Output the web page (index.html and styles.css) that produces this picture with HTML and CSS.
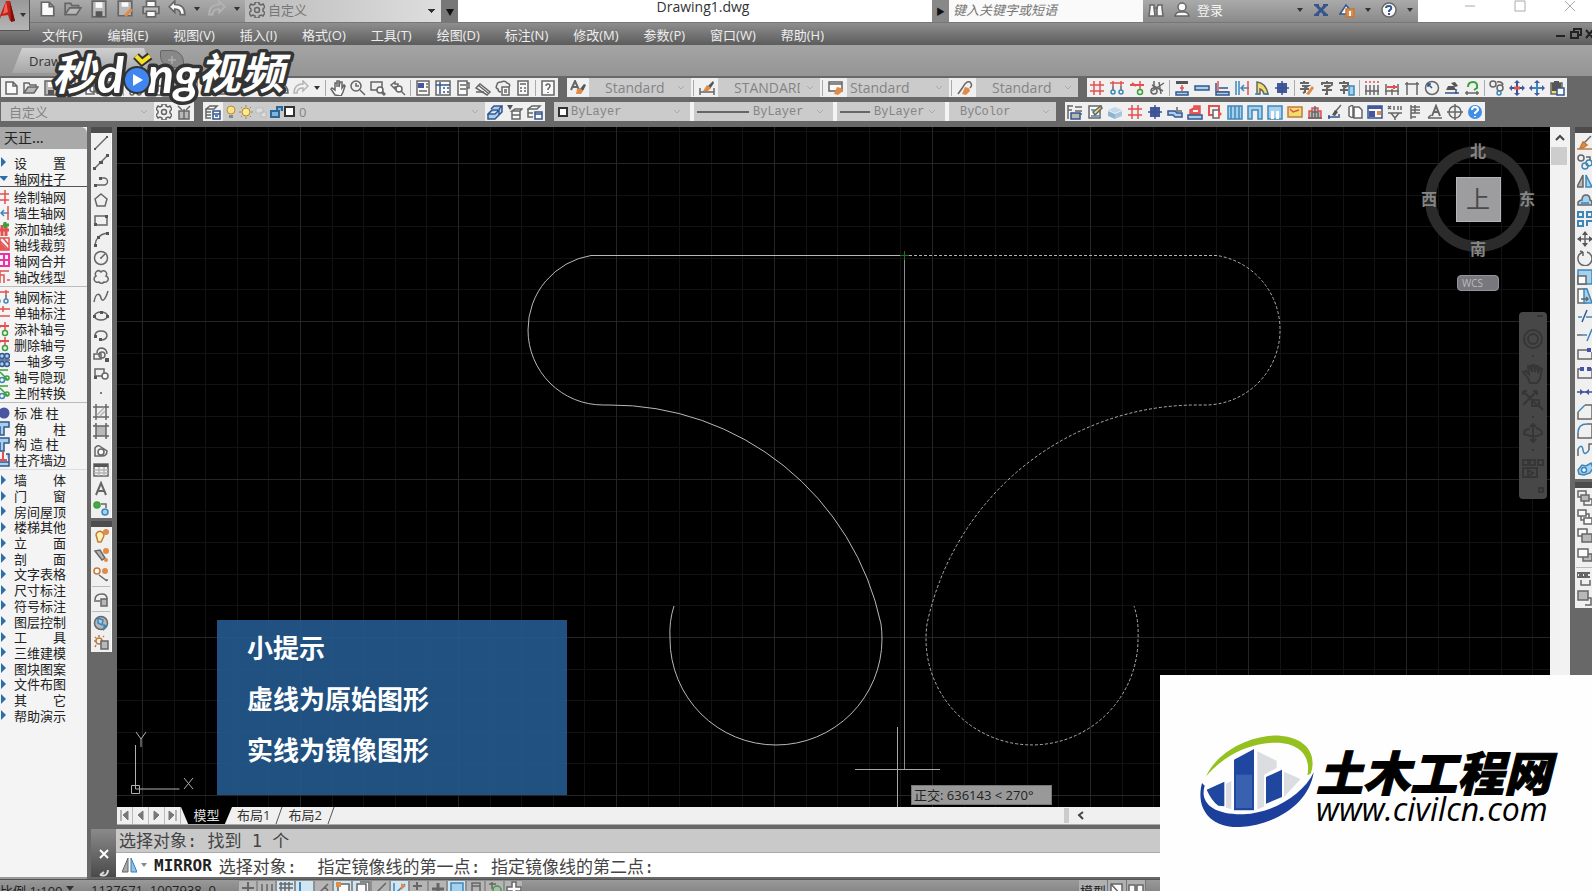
FILE: index.html
```html
<!DOCTYPE html>
<html lang="zh-CN">
<head>
    <meta charset="UTF-8">
    <meta name="viewport" content="width=device-width, initial-scale=1.0">
    <title>Drawing1.dwg</title>
    <link rel="stylesheet" href="styles.css">
</head>
<body>
<div class="app">

    <header class="titlebar">
        <button class="app-button" aria-label="应用程序菜单">
            <svg width="22" height="26" viewBox="0 0 22 26"><path d="M0 24L9 2h4l5 20h-5l-2-6-7 1-2 6z" fill="#c3201a"/><path d="M9 2l-3 13 5-2z" fill="#f0675a"/><path d="M13 2l5 20-4 1z" fill="#7c0f0c"/></svg>
            <span class="caret"></span>
        </button>
        <div class="quick" data-icons="new open save saveas print undo v redo v"></div>
        <label class="workspace">
            <svg class="ic"><use href="#i-gear"/></svg>
            <select aria-label="工作空间"><option>自定义</option></select>
        </label>
        <button class="quick-more" aria-label="更多"><span class="caret"></span></button>
        <h1>Drawing1.dwg</h1>
        <button class="search-toggle" aria-label="展开">▶</button>
        <input class="search" type="text" placeholder="键入关键字或短语" aria-label="搜索">
        <div class="info">
            <div data-icons="binoc user"></div>
            <a class="login" href="#">登录</a>
            <div data-icons="v exch cloud v qhelp v"></div>
        </div>
        <div class="window-controls">
            <button aria-label="最小化"><svg width="12" height="12"><path d="M1 6h10"/></svg></button>
            <button aria-label="最大化"><svg width="12" height="12"><path d="M1 1h10v10H1z"/></svg></button>
            <button aria-label="关闭"><svg width="12" height="12"><path d="M1 1l10 10M11 1L1 11"/></svg></button>
        </div>
    </header>

    <nav class="menubar">
        <a href="#">文件(F)</a>
        <a href="#">编辑(E)</a>
        <a href="#">视图(V)</a>
        <a href="#">插入(I)</a>
        <a href="#">格式(O)</a>
        <a href="#">工具(T)</a>
        <a href="#">绘图(D)</a>
        <a href="#">标注(N)</a>
        <a href="#">修改(M)</a>
        <a href="#">参数(P)</a>
        <a href="#">窗口(W)</a>
        <a href="#">帮助(H)</a>
        <svg class="mdi" width="36" height="14" viewBox="0 0 36 14"><path d="M0 9h9M15 5h7v6h-7zM18 5V2h7v6h-3M30 3l7 8M37 3l-7 8"/></svg>
    </nav>

    <div class="filetabs">
        <button class="filetab">Drawing1</button>
        <button class="newtab" aria-label="新建"><svg width="8" height="8"><path d="M4 0v8M0 4h8" stroke="#bbb"/></svg></button>
        <svg class="watermark" width="260" height="68" viewBox="0 0 260 68">
            <g class="wm-text">
                <text x="4" y="41" class="wm-cjk">秒</text>
                <text x="49" y="44" class="wm-latin">d</text>
                <text x="99" y="44" class="wm-latin">ng</text>
                <text x="150" y="40" class="wm-cjk">视频</text>
            </g>
            <circle cx="89" cy="31" r="14" fill="#333"/>
            <circle cx="89" cy="31" r="12" fill="#3f86f0"/>
            <path d="M85 25l10 6-10 6z" fill="#fff"/>
            <path d="M88 7l6 6 8-6" stroke="#333" stroke-width="8" fill="none"/>
            <path d="M88 7l6 6 8-6" stroke="#f7e020" stroke-width="4" fill="none"/>
        </svg>
    </div>

    <div class="toolrow">
        <div class="bar" data-icons="new open save print preview publish | cut copy paste match | block brush undo undo redo v | hand zoom zoomwin zoomprev | props dcenter palette sheet markup calc | help"></div>
        <div class="bar styles-bar">
            <svg class="ic"><use href="#i-textstyle"/></svg>
            <select class="wide" aria-label="文字样式"><option>Standard</option></select>
            <i class="sep"></i>
            <svg class="ic"><use href="#i-dimstyle"/></svg>
            <select class="wide" aria-label="标注样式"><option>STANDARD</option></select>
            <i class="sep"></i>
            <svg class="ic"><use href="#i-tablestyle"/></svg>
            <select class="tight" aria-label="表格样式"><option>Standard</option></select>
            <i class="sep"></i>
            <svg class="ic"><use href="#i-leaderstyle"/></svg>
            <select class="wide" aria-label="引线样式"><option>Standard</option></select>
        </div>
        <div class="bar" data-icons="axis axismark axisdel axiscut | wallsec wall wallcorner wallgap doorarc column | zi1 zi2 zi3 | dim1 dim2 dim3 circdim leveldim turndim | copyrot movered moveblue clip"></div>
    </div>

    <div class="toolrow">
        <div class="bar">
            <select class="custom-space" aria-label="工作空间"><option>自定义</option></select>
            <div data-icons="gear wsset"></div>
        </div>
        <div class="bar">
            <div data-icons="layers"></div>
            <label class="layer">
                <svg width="72" height="18" viewBox="0 0 72 18">
                    <circle cx="8" cy="7" r="4" fill="#fbe08a" stroke="#b5902c"/><path d="M6 12h4v3H6z" fill="#888"/>
                    <circle cx="23" cy="9" r="4" fill="#ffe98c" stroke="#a98a2e"/><path d="M23 2v2M23 14v2M16 9h2M28 9h2M18 4l1 1M28 4l-1 1M18 14l1-1M28 14l-1-1" stroke="#a98a2e"/>
                    <path d="M33 5h7v5h-7zM38 9h5v5h-5z" fill="#ddd" stroke="#bbb"/>
                    <path d="M48 8h8v6h-8zM54 8V4h5v4" fill="#7fb4dc" stroke="#2d6798" stroke-width="2"/>
                    <path d="M62 4h9v9h-9z" fill="#fff" stroke="#333" stroke-width="2"/>
                </svg>
                <select aria-label="图层"><option>0</option></select>
            </label>
            <div data-icons="layerblue layerprev layerstate"></div>
        </div>
        <div class="bar props-bar">
            <label><i class="swatch"></i><select aria-label="颜色"><option>ByLayer</option></select></label>
            <i class="sep light"></i>
            <label><i class="line"></i><select aria-label="线型"><option>ByLayer</option></select></label>
            <i class="sep light"></i>
            <label class="weight"><i class="line short"></i><select aria-label="线宽"><option>ByLayer</option></select></label>
            <i class="sep light"></i>
            <label class="plot"><select aria-label="打印样式"><option>ByColor</option></select></label>
        </div>
        <div class="bar" data-icons="settings check iso axis column wallj roof redcopy stripe arch archw yellow stairs brush2 pages window symbol ladder lettera north info"></div>
    </div>

    <div class="work">
        <aside class="palette">
            <h2>天正...</h2>
            <ul class="g2">
                <li><button data-icon="more">设　　置</button></li>
                <li><button data-icon="down">轴网柱子</button></li>
            </ul>
            <ul class="g6 dark">
                <li><button data-icon="axis">绘制轴网</button></li>
                <li><button data-icon="wallgap">墙生轴网</button></li>
                <li><button data-icon="addaxis">添加轴线</button></li>
                <li><button data-icon="trimaxis">轴线裁剪</button></li>
                <li><button data-icon="mergeaxis">轴网合并</button></li>
                <li><button data-icon="linetype">轴改线型</button></li>
            </ul>
            <ul class="g7">
                <li><button data-icon="axismark">轴网标注</button></li>
                <li><button data-icon="single">单轴标注</button></li>
                <li><button data-icon="axisdel">添补轴号</button></li>
                <li><button data-icon="axisdel">删除轴号</button></li>
                <li><button data-icon="multi">一轴多号</button></li>
                <li><button data-icon="hidenum">轴号隐现</button></li>
                <li><button data-icon="hidenum">主附转换</button></li>
            </ul>
            <ul class="g4">
                <li><button data-icon="stdcol">标 准 柱</button></li>
                <li><button data-icon="corner">角　　柱</button></li>
                <li><button data-icon="corner">构 造 柱</button></li>
                <li><button data-icon="align">柱齐墙边</button></li>
            </ul>
            <ul class="g16">
                <li><button data-icon="more">墙　　体</button></li>
                <li><button data-icon="more">门　　窗</button></li>
                <li><button data-icon="more">房间屋顶</button></li>
                <li><button data-icon="more">楼梯其他</button></li>
                <li><button data-icon="more">立　　面</button></li>
                <li><button data-icon="more">剖　　面</button></li>
                <li><button data-icon="more">文字表格</button></li>
                <li><button data-icon="more">尺寸标注</button></li>
                <li><button data-icon="more">符号标注</button></li>
                <li><button data-icon="more">图层控制</button></li>
                <li><button data-icon="more">工　　具</button></li>
                <li><button data-icon="more">三维建模</button></li>
                <li><button data-icon="more">图块图案</button></li>
                <li><button data-icon="more">文件布图</button></li>
                <li><button data-icon="more">其　　它</button></li>
                <li><button data-icon="more">帮助演示</button></li>
            </ul>
        </aside>

        <div class="desk">
            <div class="upper">
                <div class="side">
                    <div class="grip"></div>
                    <div class="vbar draw" data-icons="line xline pline polygon rect arc circle revcloud spline ellipse earc insert mkblock point hatch gradient region table mtext addsel"></div>
                    <div class="grip"></div>
                    <div class="vbar isolate" data-icons="bulb1 bulb2 bulb3 | cloudset | globe sunset"></div>
                </div>

                <div class="frame">
                    <div class="canvas-row">
                        <main class="canvas">
                            <svg class="drawing" width="100%" height="100%">
                                <defs>
                                    <pattern id="canvas-grid" x="25" y="36" width="158" height="158" patternUnits="userSpaceOnUse">
                                        <path class="minor" d="M32.5 0v158M63.5 0v158M95.5 0v158M126.5 0v158M0 32.5h158M0 63.5h158M0 95.5h158M0 126.5h158"/>
                                        <path class="major" d="M.5 0v158M0 .5h158"/>
                                    </pattern>
                                </defs>
                                <rect width="100%" height="100%" fill="url(#canvas-grid)"/>
                                <!-- mirrored result -->
                                <path class="solid" d="M787 128.500H474A75 75 0 0 0 411 203A75 75 0 0 0 486 278H492A276 276 0 0 1 764 497Q765 505 765 512A106 106 0 0 1 553 512Q552 494 557 479"/>
                                <!-- original object -->
                                <path class="dashed" d="M787 128.500H1100A75 75 0 0 1 1163 203A75 75 0 0 1 1088 278H1082A276 276 0 0 0 810 497Q809 505 809 512A106 106 0 0 0 1021 512Q1022 494 1017 479"/>
                                <path class="axis-line" d="M787.500 128V643"/>
                                <path class="snap" d="M783 128.500h9M787.500 124v9"/>
                                <path class="cross" d="M780.500 600v90M738 642.500h85"/>
                                <path class="ucs" d="M18.500 618v44h44M14.500 658.500h8v8h-8zM19 605l5 7 5-7M24 612v8M67 651l9 11M76 651l-9 11"/>
                            </svg>
                            <section class="tip">
                                <p>小提示</p>
                                <p>虚线为原始图形</p>
                                <p>实线为镜像图形</p>
                            </section>
                            <div class="tracking">正交: 636143 &lt; 270°</div>
                            <div class="viewcube">
                                <span class="north">北</span>
                                <span class="west">西</span>
                                <button class="face">上</button>
                                <span class="east">东</span>
                                <span class="south">南</span>
                            </div>
                            <button class="wcs">WCS</button>
                            <svg class="navbar" width="28" height="187" viewBox="0 0 28 187">
                                <path d="M18 4l6 0M20 176h4v4h-4z"/>
                                <circle cx="14" cy="27" r="9"/><circle cx="14" cy="27" r="5"/>
                                <path d="M9 66l-5-6 3-1 3 3-1-8 2 0 2 6v-7h2l1 7 1-6h2v7l2-5 2 1-2 10-3 4h-7z"/>
                                <path d="M4 79l14 14M18 79L4 93M4 79h4M4 79v4M18 79h-4M18 79v4M13 88h7v6h-7zM20 94l4 4"/>
                                <path d="M14 112v18M11 115l3-3 3 3M11 127l3 3 3-3M17 116q7 2 6 6-8 5-18 0 0-5 6-5"/>
                                <path d="M4 148h5v5H4zM11 148h5v5h-5zM19 148h5v5h-5zM4 156h14v9H4zM9 158l5 3-5 3z"/>
                                <path d="M13 44h2M13 105h2M13 138h2"/>
                            </svg>
                        </main>
                        <div class="vscroll">
                            <svg width="10" height="7"><path d="M1 6l4-4 4 4" fill="none" stroke="#444" stroke-width="2"/></svg>
                            <i></i>
                        </div>
                    </div>
                    <div class="layouts">
                        <div class="layout-nav">
                            <button aria-label="第一个"><svg width="9" height="11"><path d="M1 0v11M8 1v9L3 5z"/></svg></button>
                            <button aria-label="上一个"><svg width="9" height="11"><path d="M7 1v9L2 5z"/></svg></button>
                            <button aria-label="下一个"><svg width="9" height="11"><path d="M2 1v9l5-5z"/></svg></button>
                            <button aria-label="最后一个"><svg width="9" height="11"><path d="M8 0v11M1 1v9l5-5z"/></svg></button>
                        </div>
                        <button class="layout active">模型</button>
                        <button class="layout">布局1</button>
                        <svg width="8" height="17"><path d="M7 0L1 17" stroke="#555"/></svg>
                        <button class="layout">布局2</button>
                        <svg width="8" height="17"><path d="M7 0L1 17" stroke="#555"/></svg>
                        <div class="hscroll"><i></i><svg width="7" height="9"><path d="M6 1L2 4l4 4" fill="none" stroke="#444" stroke-width="2"/></svg></div>
                    </div>
                </div>

                <div class="side right">
                    <div class="grip"></div>
                    <div class="vbar modify" data-icons="erase copy2 mirror offset array move rotate scale stretch trim extend breakpt break join chamfer fillet blend explode"></div>
                    <div class="grip"></div>
                    <div class="vbar order" data-icons="front back above under | abc hatchback"></div>
                </div>
            </div>

            <div class="command">
                <div class="command-side">
                    <button aria-label="关闭"><svg width="10" height="10"><path d="M1 1l8 8M9 1L1 9" stroke="#fff" stroke-width="2"/></svg></button>
                    <svg width="12" height="10"><path d="M2 8q8 2 8-5M2 8l4-3" fill="none" stroke="#ddd" stroke-width="2"/></svg>
                </div>
                <div class="command-body">
                    <p class="history">选择对象: 找到 1 个</p>
                    <div class="prompt">
                        <svg width="15" height="16" viewBox="0 0 15 16"><path d="M6 1v14H0z" fill="#aaa" stroke="#666"/><path d="M9 1v14h6z" fill="#8cc4ea" stroke="#3a7db0"/></svg>
                        <span class="caret"></span>
                        <label for="cmd">MIRROR</label>
                        <input id="cmd" type="text" value="选择对象:  指定镜像线的第一点: 指定镜像线的第二点:">
                    </div>
                </div>
            </div>
        </div>
    </div>

    <footer class="status">
        <button class="scale">比例 1:100 <span class="caret"></span></button>
        <span class="coords">1137671, 1007938, 0</span>
        <div class="toggles" data-icons="infer snap grid ortho polar osnap osnap3 otrack ducs dyn lwt tpy qp sc am"></div>
        <div class="space"><button>模型</button><button aria-label="布局"><svg class="ic"><use href="#i-layoutpg"/></svg></button><button aria-label="快速查看"><svg class="ic"><use href="#i-quickview"/></svg></button></div>
    </footer>

    <div class="brand">
        <svg width="114" height="93" viewBox="180 226 342 279">
            <path d="M198 350C235 272 335 224 420 228C500 234 532 285 512 342L502 347C514 292 480 248 405 249C325 250 250 290 198 350z" fill="#94c11f"/>
            <path d="M186 370C165 450 215 506 300 502C410 496 508 430 521 338C490 404 400 460 310 464C220 466 178 430 194 378z" fill="#1b3f9b"/>
            <path d="M352 275l58 28v22l-38 20v96l-20 8zM432 336l50 22-50 54zM258 372l16-8v84l-16-4z" fill="#dcdde0"/>
            <path d="M282 300l60-32v184h-60zM200 390l53-24v74l-18-2q-20-14-35-48zM378 352l48-22v82l-48 20z" fill="#1f479f"/>
            <path d="M288 345l48 0v100h-48z" fill="#4c73bd" opacity=".6"/>
        </svg>
        <div class="brand-text">
            <strong>土木工程网</strong>
            <a href="#">www.civilcn.com</a>
        </div>
    </div>
</div>
<script src="script.js"></script>
</body>
</html>
```
FILE: styles.css
```css
:root {
    --chrome: #686868;
    --panel: #f0f0f0;
    --combo: #cbcbcb;
    --ui: "Open Sans", "Noto Sans CJK SC", sans-serif;
    --mono: "DejaVu Sans Mono", "Noto Sans CJK SC", monospace;
}

* {
    box-sizing: border-box;
}

body {
    margin: 0;
    height: 100vh;
    overflow: hidden;
    background: var(--chrome);
    font-family: var(--ui);
    font-size: 13px;
    color: #333;
}

button, select, input {
    margin: 0;
    padding: 0;
    border: 0;
    border-radius: 0;
    background: none;
    font: inherit;
    color: inherit;
    appearance: none;
}

a {
    color: inherit;
    text-decoration: none;
}

h1, h2, p, ul {
    margin: 0;
    padding: 0;
    list-style: none;
}

h1, h2 {
    font-weight: normal;
}

/* the status bar runs past the lower edge of the window */
.app {
    position: relative;
    display: flex;
    flex-direction: column;
    height: calc(100vh + 10px);
}

.ic {
    width: 16px;
    height: 16px;
    flex: none;
    display: block;
}

.caret {
    display: inline-block;
    border: 4px solid transparent;
    border-top: 5px solid #333;
    border-bottom: 0;
}

.sep {
    width: 5px;
    height: 16px;
    flex: none;
    border-left: 1px solid #aaa;
    margin-left: 2px;
    margin-right: -2px;
}

[data-icons] {
    display: flex;
    align-items: center;
}

[data-icons] button {
    width: 20px;
    height: 18px;
    flex: none;
    display: flex;
    align-items: center;
    justify-content: center;
}

[data-icons] button.drop {
    width: 12px;
}

.drop .caret {
    border-width: 4px 3px 0;
}

/* icon strokes and fills */
.ic, symbol { fill: none; stroke-width: 1.5; }
.k { stroke: #666; }
.b { stroke: #3f86b8; }
.n { stroke: #35558c; }
.r { stroke: #e25050; }
.g { stroke: #3aa03a; }
.l { stroke: #b4b4b4; }
.o { stroke: #c07a3e; }
.t { stroke-width: 3; }
.K { fill: #555; }
.B { fill: #a5d0ee; }
.N { fill: #4656a0; }
.R { fill: #e85858; }
.G { fill: #4aa84a; }
.Y { fill: #f2dc6c; }
.O { fill: #e08c48; }
.W { fill: #fafafa; }
.L { fill: #b8b8b8; }

/* title bar */
.titlebar {
    display: flex;
    flex: none;
    height: 22px;
    background: #fff;
}

.app-button {
    position: absolute;
    top: 0;
    left: 0;
    z-index: 2;
    width: 30px;
    height: 31px;
    display: flex;
    align-items: center;
    gap: 1px;
    background: linear-gradient(#999, #b5b5b5);
    border: solid #555;
    border-width: 0 1px 1px 0;
}

.app-button svg {
    margin-left: -3px;
    margin-top: -7px;
    flex: none;
}

.app-button .caret {
    border-width: 4px 3px 0;
}

.quick {
    padding-left: 34px;
    width: 245px;
    flex: none;
    background: linear-gradient(#aaa, #8f8f8f);
}

.titlebar .quick button {
    width: 26px;
    padding-bottom: 4px;
}

.titlebar .quick .drop {
    width: 14px;
}

.quick .ic {
    width: 18px;
    height: 18px;
}

.workspace {
    display: flex;
    align-items: center;
    gap: 3px;
    width: 196px;
    flex: none;
    padding: 0 4px 3px;
    background: linear-gradient(90deg, #bbb, #dedede);
}

.workspace select {
    flex: 1;
    color: #777;
    background: linear-gradient(45deg, transparent 50%, #333 50%) no-repeat right 5px top 8px / 4px 4px, linear-gradient(-45deg, transparent 50%, #333 50%) no-repeat right 1px top 8px / 4px 4px;
}

.quick-more {
    width: 17px;
    flex: none;
    background: #777;
}

.quick-more .caret {
    border-top-color: #111;
    border-top-width: 7px;
}

.titlebar h1 {
    flex: 1;
    padding-left: 16px;
    font-size: 14px;
    line-height: 14px;
    text-align: center;
    color: #333;
}

.search-toggle {
    width: 17px;
    flex: none;
    background: #888;
    color: #111;
    font-size: 9px;
}

.search {
    width: 194px;
    flex: none;
    padding: 0 4px 3px;
    font-style: italic;
    background: #fafafa;
    color: #777;
}

.search::placeholder {
    color: #777;
}

.info {
    display: flex;
    align-items: center;
    width: 275px;
    flex: none;
    padding-bottom: 3px;
    background: linear-gradient(#aaa, #8a8a8a);
}

.info [data-icons] button {
    width: 26px;
}

.info [data-icons] .drop {
    width: 16px;
}

.login {
    flex: 1;
    color: #f4f4f4;
    padding-left: 2px;
}

.window-controls {
    display: flex;
    flex: none;
    width: 174px;
    padding-left: 27px;
    overflow: hidden;
}

.window-controls button {
    width: 50px;
    height: 12px;
    flex: none;
}

.window-controls svg {
    fill: none;
    stroke: #aaa;
    display: block;
    margin: 0 auto;
}

/* menus */
.menubar {
    display: flex;
    flex: none;
    align-items: center;
    gap: 25px;
    height: 23px;
    padding-left: 42px;
    border-top: 1px solid #777;
    background: linear-gradient(#8e8e8e, #5c5c5c);
    color: #eee;
}

.mdi {
    margin-left: auto;
    flex: none;
    fill: none;
    stroke: #222;
    stroke-width: 2;
}

.filetabs {
    position: relative;
    display: flex;
    flex: none;
    height: 33px;
    padding: 3px 0 0 12px;
    border-bottom: 2px solid var(--chrome);
    background: linear-gradient(#a4a4a4, #959595);
}

.filetab {
    width: 140px;
    height: 25px;
    padding-left: 17px;
    text-align: left;
    background: linear-gradient(#d0d0d0, #a6a6a6);
    clip-path: polygon(10px 0, 132px 0, 140px 25px, 0 25px);
}

.newtab {
    width: 24px;
    height: 18px;
    margin: 2px 8px;
    border: 1px solid #666;
    border-radius: 2px 12px 2px 12px;
    background: #888;
    line-height: 8px;
}

.watermark {
    position: absolute;
    left: 48px;
    top: 4px;
    z-index: 3;
}

.wm-text {
    font-style: italic;
    font-weight: bold;
    fill: #fff;
    stroke: #333;
    stroke-width: 7px;
    stroke-linejoin: round;
    paint-order: stroke;
}

.wm-cjk {
    font-family: "Noto Sans CJK SC", sans-serif;
    font-size: 43px;
}

.wm-latin {
    font-family: Lato, sans-serif;
    font-size: 50px;
}

/* toolbars */
.toolrow {
    display: flex;
    flex: none;
    gap: 9px;
    height: 24px;
    padding: 0 0 5px 1px;
}

.bar {
    display: flex;
    flex: none;
    align-items: center;
    height: 19px;
    background: var(--panel);
    overflow: hidden;
}

.bar select {
    height: 19px;
    background: url("data:image/svg+xml,%3Csvg xmlns='http://www.w3.org/2000/svg' width='8' height='6'%3E%3Cpath d='M1 1l3 3 3-3' fill='none' stroke='%23aaa'/%3E%3C/svg%3E") no-repeat right 6px center var(--combo);
    color: #848484;
}

.styles-bar .ic {
    margin: 0 3px;
}

.styles-bar select {
    width: 102px;
    padding-left: 16px;
    padding-right: 20px;
    font-size: 14px;
}

.styles-bar .tight {
    padding-left: 3px;
}

.bar .custom-space {
    width: 153px;
    padding-left: 8px;
}

.layer {
    display: flex;
    align-items: center;
    width: 262px;
    background: var(--combo);
}

.layer svg {
    margin-left: 0;
    flex: none;
}

.layer select {
    flex: 1;
    padding-left: 4px;
}

.props-bar {
    font-family: "Liberation Mono", monospace;
    font-size: 12px;
}

.props-bar label {
    display: flex;
    align-items: center;
    width: 133px;
    height: 19px;
    background: var(--combo);
}

.props-bar .weight {
    width: 102px;
}

.props-bar .plot {
    width: 104px;
}

.plot select {
    padding-left: 8px;
}

.props-bar select {
    flex: 1;
    min-width: 0;
}

.sep.light {
    width: 10px;
    height: 19px;
    margin: 0;
    border: solid var(--combo);
    border-width: 0 3px;
    background: #f4f4f4;
}

.swatch {
    width: 10px;
    height: 10px;
    margin: 0 3px 0 4px;
    border: 2px solid #333;
    background: #fff;
}

.line {
    width: 52px;
    margin: 0 4px 0 0;
    border-top: 2px solid #666;
}

.line.short {
    width: 30px;
}

/* work area */
.work {
    display: flex;
    flex: 1;
    min-height: 0;
    margin-top: 1px;
}

.palette {
    width: 87px;
    flex: none;
    overflow: hidden;
    background: #f3f4f3;
    border-bottom: 2px solid #999;
    font-family: "Noto Sans CJK SC", sans-serif;
    color: #222;
}

.palette h2 {
    height: 22px;
    margin-bottom: 5px;
    padding-left: 4px;
    font-size: 14px;
    line-height: 20px;
    background: #a9a9a9;
    border-radius: 0 6px 0 0;
}

.palette ul {
    display: grid;
    grid-auto-rows: 1fr;
    margin-bottom: 2px;
    padding-top: 2px;
    border-top: 1px solid #bbb;
}

.palette .g2 { height: 32px; margin: 0; padding: 0; border: 0; }
.palette .g6 { height: 98px; }
.palette .g7 { height: 114px; }
.palette .g4 { height: 65px; }
.palette .g16 { height: 254px; border-top-color: #ddd; }
.palette .dark { border-top-color: #555; }

.palette li {
    min-height: 0;
    display: flex;
    align-items: center;
}

.palette button {
    display: flex;
    align-items: center;
    gap: 4px;
    height: 15px;
    margin-left: -6px;
    line-height: 15px;
    white-space: pre;
}

.desk {
    display: flex;
    flex: 1;
    flex-direction: column;
    min-width: 0;
}

.upper {
    display: flex;
    flex: 1;
    min-height: 0;
}

.side {
    width: 30px;
    flex: none;
    padding: 0 5px 0 4px;
}

.grip {
    height: 6px;
    background: #4c4c4c;
}

.vbar {
    width: 21px;
    display: grid;
    grid-auto-rows: 1fr;
    justify-items: center;
    background: var(--panel);
    border-right: 1px solid #fff;
    margin-bottom: 3px;
}

.vbar[data-icons] {
    display: grid;
}

.vbar button {
    min-height: 0;
}

.vbar .sep {
    width: 18px;
    height: 1px;
    margin: 0;
    border-left: 0;
    border-top: 1px solid #bbb;
}

.draw { height: 385px; }
.modify { height: 346px; }

.isolate {
    height: 125px;
    grid-template-rows: 1fr 1fr 1fr 5px 1fr 5px 1fr 1fr;
}

.order {
    height: 120px;
    grid-template-rows: 1fr 1fr 1fr 1fr 5px 1fr 1fr;
}

.right {
    width: 22px;
    padding: 0 0 0 5px;
    overflow: hidden;
}

.frame {
    display: flex;
    flex: 1;
    flex-direction: column;
    min-width: 0;
}

.canvas-row {
    display: flex;
    flex: 1;
    min-height: 0;
}

.canvas {
    position: relative;
    flex: 1;
    overflow: hidden;
    background: #000;
}

.drawing {
    display: block;
    fill: none;
}

.minor { stroke: #111313; }
.major { stroke: #232626; }
.solid { stroke: #b8b8b8; }
.dashed { stroke: #b0b0b0; stroke-dasharray: 3 2; }
.axis-line { stroke: #8c8c8c; }
.snap { stroke: #226e22; }
.cross { stroke: #a4a8a4; }
.ucs { stroke: #b0b0b0; }

.tip {
    position: absolute;
    left: 100px;
    top: 493px;
    width: 350px;
    height: 175px;
    padding: 1px 30px;
    background: rgba(36, 92, 146, .88);
    color: #fff;
    font-family: "Noto Sans CJK SC", sans-serif;
    font-size: 26px;
    font-weight: bold;
    line-height: 51px;
}

.tracking {
    position: absolute;
    left: 794px;
    top: 658px;
    width: 141px;
    height: 20px;
    padding-left: 2px;
    background: #999;
    border: 1px solid #777;
    color: #222;
    line-height: 18px;
}

.viewcube {
    position: absolute;
    right: 12px;
    top: 12px;
    width: 120px;
    height: 120px;
    display: grid;
    grid-template: 37px 46px 37px / 37px 46px 37px;
    place-items: center;
    font-size: 16px;
    font-weight: bold;
    line-height: 16px;
    color: #858585;
}

.viewcube::before {
    content: "";
    position: absolute;
    inset: 7px;
    border: 11px solid #2b2b2b;
    border-radius: 50%;
}

.viewcube > * { position: relative; }
.north { grid-area: 1 / 2; align-self: start; margin-top: 4px; }
.south { grid-area: 3 / 2; align-self: end; margin-bottom: 2px; }
.west { grid-area: 2 / 1; justify-self: start; margin-left: 3px; }
.east { grid-area: 2 / 3; justify-self: end; margin-right: 3px; }

.viewcube .face {
    grid-area: 2 / 2;
    width: 45px;
    height: 45px;
    background: #9d9d9f;
    border: 1px solid #b5b5b5;
    color: #4a4a4a;
    font-size: 24px;
    font-weight: normal;
    line-height: 24px;
}

.wcs {
    position: absolute;
    right: 51px;
    top: 148px;
    width: 42px;
    height: 16px;
    padding-left: 4px;
    background: #77777d;
    border: 1px solid #94949a;
    border-radius: 4px;
    color: #bbb;
    font-size: 10px;
    line-height: 12px;
    text-align: left;
}

.navbar {
    position: absolute;
    right: 3px;
    top: 185px;
    border-radius: 4px;
    background: #474747;
    fill: none;
    stroke: #363636;
    stroke-width: 2;
}

.vscroll {
    width: 20px;
    flex: none;
    padding: 6px 1px;
    background: #f2f2f2;
    text-align: center;
    line-height: 7px;
}

.vscroll i {
    display: block;
    width: 16px;
    height: 18px;
    margin-top: 6px;
    background: #cdcdcd;
}

.layouts {
    display: flex;
    flex: none;
    align-items: center;
    height: 18px;
    background: #f0f0f0;
    border-bottom: 1px solid #aaa;
}

.layout-nav {
    display: flex;
}

.layout-nav button {
    width: 16px;
    height: 17px;
    border-right: 1px solid #bbb;
    line-height: 11px;
}

.layout-nav svg {
    fill: #777;
    stroke: #777;
}

.layout {
    height: 17px;
    line-height: 17px;
    padding: 0 5px;
}

.layout.active {
    width: 51px;
    background: #000;
    color: #ddd;
    clip-path: polygon(0 0, 100% 0, 86% 100%, 14% 100%);
}

.hscroll {
    display: flex;
    align-items: center;
    gap: 8px;
    margin-left: auto;
    width: 506px;
}

.hscroll i {
    width: 5px;
    height: 15px;
    background: #ccc;
}

.command {
    display: flex;
    flex: none;
    height: 48px;
    margin: 4px 0 2px 4px;
}

.command-side {
    display: flex;
    flex-direction: column;
    align-items: center;
    justify-content: flex-end;
    gap: 8px;
    width: 25px;
    flex: none;
    background: linear-gradient(#8a8a8a, #4a4a4a);
}

.command-side button {
    line-height: 10px;
}

.command-body {
    flex: 1;
    background: #fff;
    font-family: var(--mono);
    font-size: 17px;
    color: #444;
}

.history {
    height: 24px;
    padding-left: 3px;
    line-height: 24px;
    background: #c9c9c9;
    border-bottom: 1px solid #aaa;
}

.prompt {
    display: flex;
    align-items: center;
    height: 24px;
    padding-left: 6px;
}

.prompt .caret {
    margin: 0 7px 0 4px;
    border-width: 4px 3px 0;
    border-top-color: #888;
}

.prompt label {
    color: #222;
    font-size: 16px;
    font-weight: bold;
}

.prompt input {
    flex: 1;
    margin-left: 7px;
    height: 24px;
}

.status {
    display: flex;
    flex: none;
    height: 22px;
    background: linear-gradient(#999, #777);
    border-top: 1px solid #555;
    font-size: 13px;
    color: #222;
}

.status .scale {
    width: 82px;
    text-align: left;
    white-space: nowrap;
}

.status .scale .caret {
    vertical-align: 5px;
}

.coords {
    width: 156px;
    padding: 1px 0 0 9px;
    white-space: nowrap;
}

.toggles {
    background: #b5b5b5;
}

.status .toggles {
    height: 18px;
}

.status .toggles button {
    width: 19px;
    border: 1px solid #909090;
}

.toggles button:nth-child(3),
.toggles button:nth-child(4),
.toggles button:nth-child(6),
.toggles button:nth-child(7),
.toggles button:nth-child(9),
.toggles button:nth-child(12) {
    background: #cfe6f4;
}

.space {
    display: flex;
    margin-left: auto;
    margin-right: 446px;
}

.space button {
    height: 20px;
    padding: 0 1px;
    border-right: 1px solid #777;
    background: #b0b0b0;
}

.brand {
    position: absolute;
    right: 0;
    bottom: 10px;
    z-index: 4;
    display: flex;
    gap: 2px;
    width: 432px;
    height: 216px;
    padding: 60px 0 0 40px;
    background: #fefefe;
}

.brand-text {
    display: flex;
    flex-direction: column;
    padding-top: 12px;
    color: #000;
}

.brand strong {
    font-family: "Noto Sans CJK SC", sans-serif;
    font-size: 47px;
    font-weight: 900;
    font-style: italic;
    line-height: 48px;
    -webkit-text-stroke: 1px #000;
}

.brand a {
    font-family: "Open Sans", sans-serif;
    font-size: 32px;
    font-style: italic;
    line-height: 28px;
}
```
FILE: script.js
```js
// 16x16 icons, the letters in class pick the stroke and fill colours
var icons = {
    'new': '<path class="k W" d="M3 2h7l4 4v8H3zM10 2v4h4"/>',
    open: '<path class="k" d="M1 13V3h5l1 2h6v2"/><path class="k L" d="M1 13l4-6h10l-4 6z"/>',
    save: '<path class="k L" d="M2 1h12v14H2z"/><path class="W" d="M5 2h6v5H5z"/><path class="K" d="M5 10h6v5H5z"/>',
    saveas: '<path class="k L" d="M2 1h12v13H2z"/><path class="W" d="M5 2h6v4H5z"/><path class="O" d="M7 13l6-6 2 2-6 6z"/>',
    print: '<path class="k W" d="M4 1h8v5H4z"/><path class="k L" d="M1 6h14v6H1z"/><path class="k W" d="M4 10h8v5H4z"/>',
    preview: '<path class="k W" d="M3 1h8v13H3z"/><circle class="k" cx="10" cy="9" r="3"/><path class="k" d="M12 11l3 3"/>',
    publish: '<path class="k L" d="M2 4h9v9H2zM5 2h9v9"/>',
    cut: '<path class="k" d="M4 1l6 10M12 1L6 11"/><circle class="k" cx="4" cy="13" r="2"/><circle class="k" cx="11" cy="13" r="2"/>',
    copy: '<path class="k W" d="M2 2h8v9H2zM6 6h8v9H6z"/>',
    paste: '<path class="k L" d="M2 2h10v12H2z"/><path class="k W" d="M7 6h7v9H7z"/>',
    match: '<path class="k L" d="M3 2h6v6H3zM5 8l-2 6h6l-1-6"/>',
    block: '<path class="k" d="M2 2h8v8H2zM6 6h8v8H6z"/>',
    brush: '<path class="k" d="M13 2L7 9"/><path class="O" d="M3 14q0-6 4-6l2 2q0 4-6 4z"/>',
    undo: '<path class="k W" d="M1 6l5-5v3q9 0 9 9h-4q0-5-5-5v3z"/>',
    redo: '<path class="l" d="M15 6l-5-5v3q-9 0-9 9h3q0-5 6-5v3z"/>',
    hand: '<path class="k W" d="M5 15l-4-6 1-1 3 2V3l2 0v4-6h2v6l1-5 2 0v6l2-3 1 1-2 6-2 4z"/>',
    zoom: '<circle class="k" cx="6" cy="6" r="5"/><path class="k" d="M10 10l5 5M6 3v3h3"/>',
    zoomwin: '<path class="k" d="M1 2h11v8H1z"/><circle class="k W" cx="10" cy="10" r="3"/><path class="k t" d="M12 12l3 3"/>',
    zoomprev: '<path class="k" d="M1 5l4-3v2h3v3H5v2z"/><circle class="k W" cx="9" cy="9" r="3"/><path class="k" d="M11 11l4 4"/>',
    props: '<path class="k W" d="M2 1h12v14H2z"/><path class="N" d="M3 3h6v5H3z"/><path class="k" d="M4 11h8M11 4h2M11 7h2"/>',
    dcenter: '<path class="k W" d="M1 1h14v14H1z"/><path class="n" d="M1 5h14M5 2v12M8 8h2M12 8h2M8 12h2M12 12h2"/>',
    palette: '<path class="k W" d="M3 1h9v14H3z"/><path class="k" d="M5 5h6M5 9h6M12 3h2v5h-2"/>',
    sheet: '<path class="k W" d="M1 8l4-4 10 8-3 3z"/><path class="k" d="M1 12h8M3 5l10 8"/>',
    markup: '<path class="k" d="M2 5q0-3 4-3 4-2 6 1 4 1 2 4M2 5q-2 3 1 4 0 3 3 3"/><path class="k W" d="M7 7h7v8H7z"/><path class="k" d="M9 10h3M9 12h3"/>',
    calc: '<path class="k W" d="M3 1h10v14H3z"/><path class="k" d="M5 4h6M5 8h2M9 8h2M5 11h2M9 11h2"/>',
    help: '<path class="k W" d="M2 1h12v14H2z"/><path class="k" d="M6 6q0-2 2-2t2 2q0 1-2 3v1M8 12v1"/>',
    textstyle: '<path class="k" stroke-width="2" d="M1 10L5 1l4 9M3 7h5"/><path class="K" d="M10 9l4-5 2 1-3 6z"/><path class="O" d="M6 14l1-5 3-1 3 3-2 3z"/>',
    dimstyle: '<path class="k" d="M1 8v7M15 8v7M1 12h14"/><path class="K" d="M9 6l5-5 1 2-4 6z"/><path class="O" d="M4 11l4-6 4 3-3 3z"/>',
    tablestyle: '<path class="k W" d="M1 2h13v9H1zM1 4h13"/><path class="O" d="M6 14l3-7 4 1 2 3-5 4z"/>',
    leaderstyle: '<path class="k" d="M1 14l5-7q3-6 7-5 3 3 0 6"/><path class="O" d="M5 14l3-7 4 1 1 3-4 4z"/>',
    gear: '<circle class="k" cx="8" cy="8" r="2.500"/><path class="k" d="M6 2V0h4v2l2 1 2-1 2 3-2 2v2l2 2-2 3-2-1-2 1v2H6v-2l-2-1-2 1-2-3 2-2V7L0 5l2-3 2 1z"/>',
    wsset: '<path class="k L" d="M3 7h10v8H3z"/><path class="k" d="M2 2l4 4M14 2l-4 4M8 5v10"/>',
    layers: '<path class="k W" d="M1 5l4-3h7L9 5zM1 5v9h5M1 8h5M1 11h5"/><path class="n W" d="M8 7h7v8H8z"/><path class="n" d="M8 10h7M10 12h3"/>',
    layerblue: '<path class="n B" d="M1 10l4-4h7l-4 4zM1 10v5h7l4-4V6M4 5l3-3h8l-3 3M15 2v6l-3 3"/>',
    layerprev: '<path class="K" d="M0 1h6L3 6z"/><path class="k W" d="M5 7l3-2h7l-2 2zM5 7v8h8V7zM5 11h8"/>',
    layerstate: '<path class="k W" d="M1 5l4-3h8l-3 3zM1 5v8h5M1 9h5"/><path class="n W" d="M8 8h7v7H8zM8 10h7"/>',
    binoc: '<path class="k W" d="M2 3h4v3l1 8H1l1-8zM10 3h4v3l1 8H9V6z"/><path class="k" d="M6 6h4"/>',
    user: '<circle class="k W" cx="8" cy="5" r="4"/><path class="k W" d="M1 14q1-4 5-4h4q4 0 5 4z"/>',
    exch: '<path class="n t" d="M3 3l10 10M13 3L3 13"/><path class="n" stroke-width="2" d="M1 3h5M10 3h5M1 13h5M10 13h5"/>',
    cloud: '<path class="n W" d="M1 12l6-9 4 5-4 4z"/><path class="o O" d="M7 7h8v8H7z"/><path class="W" d="M10 9h2v5h-2z"/>',
    qhelp: '<circle class="k W" cx="8" cy="8" r="7"/><path class="n" stroke-width="2" d="M5 6q0-2 3-2t2 3L8 9v1M8 11v2"/>',

    axis: '<path class="r" d="M5 1v14M11 1v14M1 5h14M1 11h14"/>',
    axismark: '<path class="r" d="M1 3h14M4 1v5M12 1v5"/><path class="k" d="M4 6v4M12 6v4"/><circle class="b" cx="4" cy="12" r="2"/><circle class="b" cx="12" cy="12" r="2"/>',
    axisdel: '<path class="r" stroke-width="2" d="M1 5h14M3 3l4 3"/><path class="r" d="M11 1v8"/><circle class="g" cx="11" cy="12" r="2.500"/>',
    axiscut: '<circle class="k" cx="5" cy="11" r="3"/><path class="k" d="M5 8V1M3 5l11 6M3 11l12-8M10 2l2 12"/>',
    wallsec: '<path class="K" d="M2 1h12v3H2z"/><path class="r" d="M8 5v6M6 8h4"/><path class="n B" d="M2 12h12v3H2z"/>',
    wall: '<path class="n B" d="M1 6h14v4H1z"/>',
    wallcorner: '<path class="r" d="M4 1v11h11"/><path class="n B" d="M2 12h13v3H2zM2 3v9M5 8h9"/>',
    wallgap: '<path class="b" d="M2 1v14M5 1v14M15 8H7M10 5L7 8l3 3"/><path class="r" d="M14 1v14"/>',
    doorarc: '<path class="k Y" d="M3 14V2q9 1 11 12h-4q-1-4-4-5v5z"/><path class="b" d="M1 14h5M11 14h4"/>',
    column: '<path class="N" d="M3 3h10v10H3z"/><path class="n" d="M8 1v14M1 8h14"/>',
    zi1: '<path class="k" stroke-width="2" d="M1 3h9M5 1v2M3 6h6L6 8v4l-2 1M1 9h9"/><path class="O" d="M7 14l6-8 2 2-5 7z"/>',
    zi2: '<path class="k" stroke-width="2" d="M3 5V3h10v2M8 1v2M5 6h6L8 8v6l-2 0M3 10h10"/>',
    zi3: '<path class="k" stroke-width="2" d="M1 4V3h8v2M5 1v2M3 6h5L5 8v6M1 10h8"/><path class="b B" d="M10 6h5v9h-5z"/>',
    dim1: '<path class="r" d="M2 1v2M6 1v2M10 1v2M14 1v2"/><path class="k" d="M2 5v10M6 5v10M10 5v10M14 5v10M1 11h14"/>',
    dim2: '<path class="k" d="M2 4v11M8 9v6M14 4v11M1 11h14"/><path class="r" stroke-width="2" d="M3 7h10M10 5v4"/>',
    dim3: '<path class="k" d="M3 6v9M13 6v9M1 4h14M3 2v4M13 2v4"/>',
    circdim: '<circle class="k" cx="8" cy="8" r="6.500"/><path class="n" d="M8 8L4 4h3M4 4v3"/>',
    leveldim: '<path class="K" d="M2 10l2-4h6l2 4zM7 3l4-1 3 4-3 1z"/><path class="n" d="M1 13h14M12 9v5"/>',
    turndim: '<path class="g" stroke-width="2" d="M4 7q0-5 5-5t4 6l-3 2"/><path class="k" d="M1 13h14M3 11v4M13 11v4"/>',
    copyrot: '<circle class="k" cx="4" cy="4" r="3"/><circle class="k" cx="11" cy="8" r="3"/><circle class="b" cx="10" cy="13" r="2"/><path class="k" d="M8 2q5-1 6 3"/>',
    movered: '<path class="n" stroke-width="2" d="M8 1v14M1 8h14"/><path class="r t" d="M5 8h6"/><path class="N" d="M8 0l3 3H5zM8 16l3-3H5zM0 8l3-3v6zM16 8l-3-3v6z"/>',
    moveblue: '<path class="b" stroke-width="2" d="M8 1v14M1 8h14"/><path class="N" d="M8 0l3 3H5zM8 16l3-3H5zM0 8l3-3v6zM16 8l-3-3v6z"/>',
    clip: '<path class="k Y" d="M2 3h11v11H2z"/><path class="K" d="M3 3h9v8H3zM5 1h5v2H5z"/><path class="n W" d="M8 8h7v7H8z"/>',

    settings: '<path class="k" d="M1 1v14M1 2h5M8 3h7M1 6h4M8 7h7M8 10h7"/><path class="n L" d="M4 9h9v6H4z"/>',
    check: '<path class="k W" d="M2 2h11v12H2z"/><path class="k Y" d="M6 8l8-6 1 2-7 7z"/><path class="b" d="M4 6h4M4 12h8"/>',
    iso: '<path d="M1 6l7-3 7 3-7 3z" fill="#c3d9ea"/><path d="M1 7l7 3v5l-7-3z" fill="#8fb4d2"/><path d="M15 7l-7 3v5l7-3z" fill="#a8c6de"/>',
    wallj: '<path class="n B" d="M1 7h7l2 2h5v4H8l-2-2H1z"/><path class="k" d="M10 3v4h5"/>',
    roof: '<path class="r R" d="M3 10V6l4-2V2h6v8z"/><path class="n B" d="M1 11h14v4H1z"/><path class="W" d="M6 6h5v2H6z"/>',
    redcopy: '<path class="r" stroke-width="2" d="M2 2h10v9H2z"/><path class="k W" d="M6 6h6v8H6z"/><path class="R" d="M11 6l4 4-4 4z"/>',
    stripe: '<path class="b B" d="M1 2h14v13H1z"/><path class="b" d="M4 2v13M8 2v13M12 2v13"/>',
    arch: '<path class="b B" d="M1 2h14v13h-4V6H5v9H1z"/>',
    archw: '<path class="b B" d="M1 2h14v13H1z"/><path class="W" d="M4 7h3v8H4zM9 7h3v8H9z"/>',
    yellow: '<path class="o Y" d="M1 3h14v10H1z"/><path class="r" d="M3 5l3 3 6-2"/>',
    stairs: '<path class="r L" d="M2 14V7h3V4h6v3h3v7z"/><path class="k" d="M5 14V8h6v6M8 2v12M1 14h14"/>',
    brush2: '<path class="k" d="M14 1L8 8"/><path class="K" d="M5 11l3-5 3 2-3 4z"/><path class="n" d="M1 13h10M2 11v4M12 10v4"/>',
    pages: '<path class="k W" d="M2 3q4-3 4 0v9q0 3-4 0zM7 3h5l3 3v8H7z"/>',
    window: '<path class="n W" d="M1 2h14v12H1z"/><path class="N" d="M1 2h14v3H1zM2 7h6v6H2z"/><path class="O" d="M10 7h4v4h-4z"/>',
    symbol: '<path class="k" d="M1 2l3 3M4 2L1 5M7 2v4M11 2v4M14 2v4M1 9h14M4 9l4 5 4-5M8 14v2"/>',
    ladder: '<path class="k" d="M4 1v14M4 3h9M4 6h9M4 9h9M4 13h5M8 1v8"/>',
    lettera: '<path class="k" stroke-width="2" d="M5 12L9 2l4 10M7 8h5"/><path class="k" d="M1 14h14M1 14l3-3"/>',
    north: '<circle class="k" cx="8" cy="8" r="6"/><path class="k" d="M8 0v16M0 8h16"/>',
    info: '<circle cx="8" cy="8" r="7" fill="#3f8ee8"/><path d="M5 6q0-3 3-3t3 3L8 9v1M8 12v1" stroke="#fff" stroke-width="2"/>',

    more: '<path d="M7 3l5 5-5 5z" fill="#2d6da8"/>',
    down: '<path d="M5 6h9l-4 5z" fill="#2d6da8"/>',
    addaxis: '<path class="r t" d="M8 4v11M12 4v11M5 9h10"/><path class="g t" d="M11 1v6M9 4h6"/>',
    trimaxis: '<path class="r" d="M6 2h9v12H6zM6 5l9 9M9 2l6 7"/><path class="R" d="M6 6l8 8H6z"/>',
    mergeaxis: '<path stroke="#ee30a8" stroke-width="2" d="M5 2h10v12H5zM10 2v12M5 8h10"/>',
    linetype: '<path class="r" d="M6 15V3h9M6 7h4v8M13 12h3"/>',
    single: '<path class="r" d="M5 4h11M9 1v6"/><path class="r" d="M5 11h11"/>',
    multi: '<circle class="n B" cx="8" cy="4" r="2.500"/><circle class="n B" cx="13" cy="4" r="2.500"/><circle class="n B" cx="8" cy="12" r="2.500"/><circle class="n B" cx="13" cy="12" r="2.500"/><path class="n" d="M5 8h11"/>',
    hidenum: '<path class="g" d="M6 2h8M6 4l8 8"/><circle class="b" cx="8" cy="12" r="2.500"/><circle class="g" cx="13" cy="10" r="2"/>',
    stdcol: '<circle class="N" cx="10" cy="8" r="5.500"/>',
    corner: '<path class="B n" d="M4 2h11v5h-5v8H6V7H4z"/>',
    align: '<path class="r" stroke-width="2" d="M9 1v9M5 9h8"/><path class="n B" d="M5 11h10v4H5zM12 3h3v8"/>',

    line: '<path class="k" d="M2 14L14 2"/><path class="K" d="M1 13h2v2H1zM13 1h2v2h-2z"/>',
    xline: '<path class="k" d="M2 14L14 2"/><path class="K" d="M0 13h3v3H0zM13 0h3v3h-3zM6 7h4v3H6z"/>',
    pline: '<path class="k" d="M2 12h9a3 3 0 0 0 0-7H8"/><path class="K" d="M1 11h3v3H1zM6 4h3v3H6z"/>',
    polygon: '<path class="k" d="M8 2l6 5-2 7H4L2 7z"/>',
    rect: '<path class="k" d="M2 4h12v9H2z"/><path class="K" d="M12 3h3v3h-3zM1 11h3v3H1z"/>',
    arc: '<path class="k" d="M2 14Q3 4 14 2"/><path class="K" d="M1 13h3v3H1zM4 5h3v3H4zM13 1h3v3h-3z"/>',
    circle: '<circle class="k" cx="8" cy="8" r="6.500"/><path class="k" d="M8 8l4-4M7 8h2"/>',
    revcloud: '<path class="k" d="M8 3a3 3 0 1 0-5 4 3 3 0 1 0 3 6 3 3 0 0 0 5 0 3 3 0 1 0 2-6 3 3 0 1 0-5-4z"/>',
    spline: '<path class="k" d="M1 13C3 2 7 5 8 9s4 3 7-7"/>',
    ellipse: '<ellipse class="k" cx="8" cy="8" rx="6.500" ry="4"/><path class="K" d="M0 7h3v3H0zM13 7h3v3h-3zM7 3h3v3H7z"/>',
    earc: '<path class="k" d="M2 9q0-5 6-5t6 5q-1 4-6 4"/><path class="K" d="M6 11h3v3H6zM1 8h3v3H1z"/>',
    insert: '<path class="k" d="M4 7q0-5 5-5 5 1 5 6M1 8h7v5H1z"/><circle class="k" cx="9" cy="9" r="3"/><path class="K" d="M12 12h4v4h-4z"/>',
    mkblock: '<path class="k" d="M2 3h9v7H2z"/><circle class="k W" cx="12" cy="10" r="3"/><path class="K" d="M1 10h3v3H1z"/>',
    point: '<circle class="K" cx="8" cy="8" r="1"/>',
    hatch: '<path class="k" d="M3 3h10v10H3zM3 0v3H0M13 0v3h3M3 16v-3H0M13 16v-3h3"/><path class="l" d="M4 11l7-7M7 12l5-5"/>',
    gradient: '<path class="k L" d="M3 3h10v10H3zM3 0v3H0M13 0v3h3M3 16v-3H0M13 16v-3h3"/>',
    region: '<path class="k" d="M2 13V5q3-4 6-1l6 4q0 5-5 5z"/><circle class="k W" cx="8" cy="9" r="3"/>',
    table: '<path class="k" d="M1 2h14v12H1z"/><path class="l" d="M1 8h14M1 11h14M6 5v9M11 5v9"/><path class="K" d="M1 2h14v3H1z"/>',
    mtext: '<path class="k" stroke-width="2" d="M3 14L8 2l5 12M5 10h6"/>',
    addsel: '<circle class="g G" cx="4" cy="5" r="3"/><circle class="b B" cx="12" cy="12" r="3"/><path class="k" d="M8 4h5v4"/>',
    bulb1: '<path class="o" d="M3 6a4 4 0 1 1 7 3l-2 4H5z" fill="#fff2b0"/><circle class="O" cx="13" cy="3" r="3"/>',
    bulb2: '<path class="k L" d="M2 3l7 9 3-2-5-8z"/><circle class="O" cx="13" cy="3" r="3"/><circle class="O" cx="13" cy="12" r="2"/>',
    bulb3: '<circle class="o W" cx="4" cy="4" r="3"/><circle class="O" cx="12" cy="4" r="3"/><path class="k" d="M6 8l8 6M12 13h3"/>',
    cloudset: '<path class="k" d="M2 9q0-6 7-6 5 0 5 5M1 10h6"/><path class="k L" d="M8 8h6v7H8z"/>',
    globe: '<circle class="k L" cx="8" cy="8" r="6.500"/><path class="b B" d="M5 3l5 2-1 5-4-2zM11 10l2 1-2 3z"/>',
    sunset: '<circle class="o" cx="6" cy="7" r="3"/><path class="o" d="M6 1v2M1 7h2M2 3l1 1M10 3l1-1M3 11l-1 2"/><path class="k L" d="M8 7h7v8H8z"/>',

    erase: '<path class="k" d="M14 1L6 9"/><path class="o O" d="M3 13l3-6 4 3-4 3z"/><path class="o" d="M0 14h15"/>',
    copy2: '<circle class="k" cx="4" cy="4" r="3"/><circle class="b" cx="8" cy="12" r="3"/><circle class="b" cx="12" cy="9" r="3"/><path class="k" d="M9 3h4v3"/>',
    mirror: '<path class="k L" d="M6 2v12H0z"/><path class="b B" d="M9 2v12h6z"/>',
    offset: '<path class="k B" d="M1 13v-3q2-2 4-2 0-5 4-5t4 5q2 0 2 5z"/><path class="b" d="M4 11h8"/>',
    array: '<path class="b" stroke-width="2" d="M1 1h5v5H1zM10 1h5v5h-5zM1 10h5v5H1zM10 15v-5h5"/>',
    move: '<path class="k" d="M8 1v14M1 8h14"/><path class="K" d="M8 0l3 4H5zM8 16l3-4H5zM0 8l4-3v6zM16 8l-4-3v6z"/>',
    rotate: '<path class="k" d="M6 2q-5 2-5 6a7 7 0 1 0 9-6M6 2l-3-1M6 2v4"/>',
    scale: '<path class="b B" d="M1 1h14v14H1z"/><path class="k W" d="M1 7h8v8H1z"/>',
    stretch: '<path class="k W" d="M1 1h8v14H1z"/><path class="b B" d="M7 1h3l5 14H7z"/><path class="k" d="M4 11h7M9 9l2 2-2 2"/>',
    trim: '<path class="b" d="M1 9h4M9 9h7"/><path class="n" d="M5 14l5-12"/>',
    extend: '<path class="k" d="M0 8h5"/><path class="b" d="M5 8h5M10 14l5-12"/>',
    breakpt: '<path class="k" d="M10 4H1v9h14V6"/><path class="N" d="M10 2h4v4h-4z"/>',
    'break': '<path class="k" d="M4 4H1v9h14V4h-3"/><path class="N" d="M3 2h4v4H3zM10 2h4v4h-4z"/>',
    join: '<path class="n" d="M0 8h15"/><path class="N" d="M3 5l4 3-4 3zM12 5L8 8l4 3z"/>',
    chamfer: '<path class="k" d="M8 1h7v14H1V8"/><path class="b" d="M1 8l7-7"/>',
    fillet: '<path class="k" d="M10 1h5v14H1v-5"/><path class="b" d="M1 10q0-9 9-9"/>',
    blend: '<path class="k" d="M1 14V7M12 8V2h3"/><path class="b" d="M1 7q4-6 5 1t6 0"/>',
    explode: '<path class="b B" d="M1 9l4-5 4 1 5-3 2 5-3 5-6 2-5-1z"/><circle class="b W" cx="7" cy="9" r="2.500"/>',
    front: '<path class="k" d="M1 1h8v6H1zM7 9h8v6H7z"/><path class="k L" d="M4 5h8v6H4z"/>',
    back: '<path class="k W" d="M4 5h8v6H4z"/><path class="k W" d="M1 1h8v6H1zM7 9h8v6H7z"/>',
    above: '<path class="k W" d="M1 1h9v7H1z"/><path class="k L" d="M5 6h10v8H5z"/>',
    under: '<path class="k L" d="M6 7h9v7H6z"/><path class="k W" d="M1 2h10v8H1z"/>',
    abc: '<path class="k" stroke-width="2" d="M0 2h3v4H0zM5 2h3v4H5zM13 2h-3v4h3"/><path class="k" d="M4 9v5h9V9"/>',
    hatchback: '<path class="k" d="M6 8h8v7H8"/><path class="k L" d="M1 1h10v9H1z"/>',

    infer: '<path class="k" stroke-width="2" d="M8 1v14M2 7h12"/>',
    snap: '<path class="k" d="M3 3v10M8 3v10M13 3v10"/>',
    grid: '<path class="k" d="M1 3h14M1 7h14M1 11h14M3 1v14M7 1v14M11 1v14"/>',
    ortho: '<path class="b" stroke-width="2" d="M3 1v10h12"/>',
    polar: '<path class="k" d="M3 12L12 3M3 12h9M12 12a8 8 0 0 0-3-6"/>',
    osnap: '<path class="k W" d="M3 3h11v10H3z"/><path class="O" d="M1 1h5v5H1z"/>',
    osnap3: '<path class="k W" d="M3 3h9v11H3zM6 1h9v10"/>',
    otrack: '<path class="k" d="M2 13L13 2M6 13h5"/>',
    ducs: '<path class="b" d="M2 2v12h12M2 14L13 3"/><path class="O" d="M9 2l5 3-5 4z"/>',
    dyn: '<path class="k" stroke-width="2" d="M2 5h9M6 1v8M9 12h6"/>',
    lwt: '<path class="k" stroke-width="3" d="M8 2v9M2 8h12"/>',
    tpy: '<path class="b B" d="M2 2h12v11H2z"/>',
    qp: '<path class="k" d="M4 2h8v12H4zM4 5h8"/>',
    sc: '<path class="k" d="M2 3h7M5 1v7"/><circle class="g" cx="10" cy="9" r="4"/>',
    am: '<path class="k W" d="M6 1h4v5h5v4h-5v5H6v-5H1V6h5z"/>',
    layoutpg: '<path class="k W" d="M2 2h11v12H2zM2 2l10 11"/>',
    quickview: '<path class="k W" d="M1 3h6v7H1zM9 3h6v7H9z"/>'
};

var sprite = '<svg width="0" height="0" style="position:absolute"><defs>';
for (var name in icons) {
    sprite += '<symbol id="i-' + name + '" viewBox="0 0 16 16">' + icons[name] + '</symbol>';
}
document.body.insertAdjacentHTML('afterbegin', sprite + '</defs></svg>');

function iconSvg(id) {
    return '<svg class="ic"><use href="#i-' + id + '"/></svg>';
}

// fill the toolbars
document.querySelectorAll('[data-icons]').forEach(function (bar) {
    bar.innerHTML = bar.dataset.icons.split(' ').map(function (id) {
        if (id === '|') return '<i class="sep"></i>';
        if (id === 'v') return '<button class="drop" aria-label="展开"><span class="caret"></span></button>';
        return '<button aria-label="' + id + '">' + iconSvg(id) + '</button>';
    }).join('');
});

document.querySelectorAll('[data-icon]').forEach(function (button) {
    button.insertAdjacentHTML('afterbegin', iconSvg(button.dataset.icon));
});
```
